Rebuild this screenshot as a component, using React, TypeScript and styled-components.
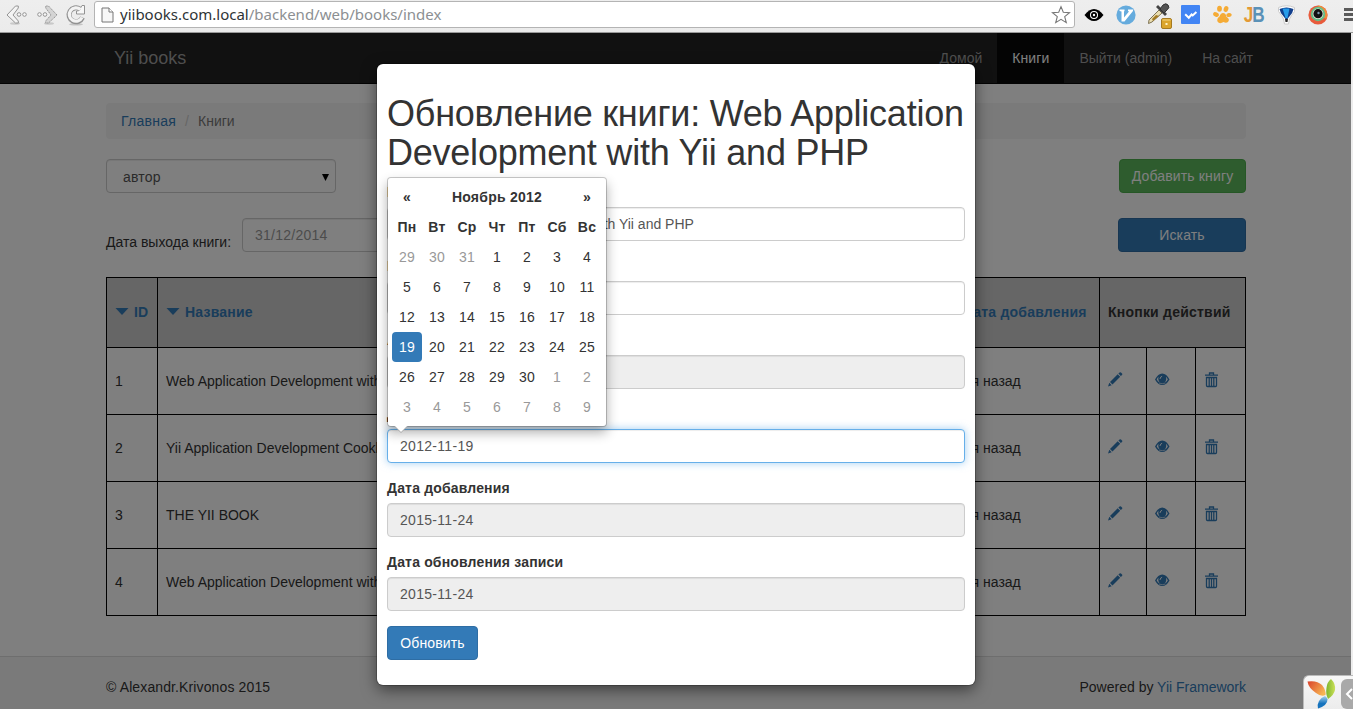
import React from "react";
import styled, { createGlobalStyle, css } from "styled-components";

const GlobalStyle = createGlobalStyle`
  *, *::before, *::after { box-sizing: border-box; }
  body {
    margin: 0;
    background: #fff;
    color: #333;
    font-family: "Liberation Sans", Arial, sans-serif;
    font-size: 14px;
    line-height: 20px;
    letter-spacing: 0;
    overflow: hidden;
  }
  input, button { font: inherit; letter-spacing: inherit; }
`;

const Window = styled.div`
  display: flex;
  flex-direction: column;
  width: 1353px;
  height: 709px;
  overflow: hidden;
  background: #ededed;
`;

/* Browser toolbar */

const Toolbar = styled.div`
  display: flex;
  flex: none;
  height: 33px;
  padding-left: 2px;
  background: linear-gradient(#eeeeee, #ebebeb);
  border-bottom: 1px solid #9a9a9a;
`;

const ToolSlot = styled.div<{ $width: number }>`
  display: flex;
  flex: none;
  align-items: center;
  justify-content: center;
  width: ${(p) => p.$width}px;
  height: 29px;
`;

const AddressBar = styled.div`
  display: flex;
  flex: none;
  align-items: center;
  width: 981px;
  height: 27px;
  margin: 1px 3px 0 4px;
  padding: 0 3px 0 6px;
  background: #fff;
  border: 1px solid #b4b4b4;
  border-radius: 3px;
`;

const Url = styled.span`
  flex: 1;
  margin: -2px 0 0 6px;
  color: #8c8f92;
  font: 15px/20px "Noto Sans", "Open Sans", sans-serif;
`;

const UrlHost = styled.span`
  color: #2e3436;
`;

const MenuGlyph = styled.div`
  display: flex;
  flex: none;
  flex-direction: column;
  gap: 2px;
  width: 19px;
  height: 29px;
  padding: 8px 0 0 10px;
`;

const MenuBar = styled.span`
  height: 3px;
  background: #5a5a5a;
`;

/* Page under the dialog */

const Viewport = styled.main`
  position: relative;
  display: flex;
  flex-direction: column;
  width: 1351px;
  height: 676px;
  background: #fff;
`;

const Navbar = styled.nav`
  display: flex;
  flex: none;
  justify-content: space-between;
  height: 51px;
  padding: 0 83px 0 114px;
  background: #222;
  border-bottom: 1px solid #080808;
`;

const Brand = styled.span`
  color: #9d9d9d;
  font-size: 18px;
  line-height: 50px;
`;

const NavList = styled.div`
  display: flex;
`;

const NavLink = styled.a<{ $active?: boolean }>`
  padding: 0 15px;
  line-height: 51px;
  letter-spacing: ${(p) => (p.$active ? "0.1px" : "0")};
  color: ${(p) => (p.$active ? "#fff" : "#9d9d9d")};
  background: ${(p) => (p.$active ? "#080808" : "transparent")};
`;

const Container = styled.div`
  display: flex;
  flex-direction: column;
  width: 1140px;
  margin: 19px 0 0 106px;
`;

const Breadcrumb = styled.div`
  display: flex;
  height: 36px;
  padding: 8px 15px;
  margin-bottom: 20px;
  background: #f5f5f5;
  border-radius: 4px;
  color: #777;
`;

const Divider = styled.span`
  width: 22px;
  text-align: center;
  color: #ccc;
`;

const Link = styled.a<{ $wide?: boolean }>`
  letter-spacing: ${(p) => (p.$wide ? "0.25px" : "0")};
  color: #337ab7;
`;

const FilterRow = styled.div`
  display: flex;
  height: 34px;
  margin-bottom: 25px;
`;

const control = css`
  height: 34px;
  padding: 6px 12px;
  color: #555;
  background: #fff;
  border: 1px solid #ccc;
  border-radius: 4px;
  box-shadow: inset 0 1px 1px rgba(0, 0, 0, 0.075);
`;

const Select = styled.div`
  ${control}
  display: flex;
  justify-content: space-between;
  align-items: center;
  width: 230px;
  padding: 8px 6px 6px 16px;
  letter-spacing: 0.2px;
`;

const FilterLabel = styled.label`
  width: 136px;
  padding-top: 14px;
  white-space: nowrap;
`;

const FilterInput = styled.input`
  ${control}
  width: 230px;
  letter-spacing: 0.25px;
  &::placeholder { color: #999; opacity: 1; }
`;

const Button = styled.button<{ $tone: "success" | "primary"; $width: number; $push?: boolean }>`
  width: ${(p) => p.$width}px;
  height: 34px;
  margin-left: ${(p) => (p.$push ? "auto" : "0")};
  padding: 0;
  color: #fff;
  letter-spacing: 0.15px;
  white-space: nowrap;
  border-radius: 4px;
  border: 1px solid ${(p) => (p.$tone === "success" ? "#4cae4c" : "#2e6da4")};
  background: ${(p) => (p.$tone === "success" ? "#5cb85c" : "#337ab7")};
`;

const Table = styled.table`
  width: 1140px;
  table-layout: fixed;
  border-collapse: collapse;
`;

const Th = styled.th`
  height: 70px;
  padding: 0 8px 2px;
  text-align: left;
  letter-spacing: 0.22px;
  white-space: nowrap;
  background: #ccc;
  border: 1px solid #000;
`;

const Td = styled.td`
  height: 67px;
  padding: 0 8px;
  white-space: nowrap;
  border: 1px solid #000;
`;

const SortLink = styled.a`
  display: flex;
  align-items: center;
  gap: 5px;
  color: #337ab7;
`;

const IconLink = styled.a`
  display: block;
  height: 18px;
  color: #337ab7;
`;

const Footer = styled.footer`
  display: flex;
  justify-content: space-between;
  height: 53px;
  margin-top: auto;
  padding: 20px 105px 0 106px;
  background: #f5f5f5;
  border-top: 1px solid #ddd;
`;

const Copyright = styled.span`
  letter-spacing: 0.12px;
`;

const Backdrop = styled.div`
  position: absolute;
  inset: 0;
  background: rgba(0, 0, 0, 0.5);
`;

/* Dialog */

const Dialog = styled.section`
  position: absolute;
  top: 31px;
  left: 377px;
  width: 598px;
  height: 621px;
  padding: 10px;
  background: #fff;
  border-radius: 6px;
  box-shadow: 0 5px 15px rgba(0, 0, 0, 0.5), 0 0 0 1px rgba(0, 0, 0, 0.2);
`;

const Title = styled.h1`
  margin: 20px 0 10px;
  font-size: 36px;
  font-weight: 400;
  line-height: 39px;
  letter-spacing: -0.23px;
  white-space: nowrap;
`;

const Field = styled.div`
  display: flex;
  flex-direction: column;
  margin-bottom: 15px;
`;

const Label = styled.label`
  height: 20px;
  margin-bottom: 5px;
  font-weight: 700;
  letter-spacing: 0.17px;
`;

const TextInput = styled.input<{ $active?: boolean; $numeric?: boolean }>`
  ${control}
  width: 100%;
  outline: none;
  letter-spacing: ${(p) => (p.$numeric ? "0.3px" : "0")};
  &[readonly] { background: #eee; }
  ${(p) =>
    p.$active &&
    css`
      border-color: #66afe9;
      box-shadow: inset 0 1px 1px rgba(0, 0, 0, 0.075), 0 0 8px rgba(102, 175, 233, 0.6);
    `}
`;

const Picker = styled.div`
  position: absolute;
  top: 113px;
  left: 10px;
  width: 220px;
  height: 250px;
  padding: 4px;
  letter-spacing: 0.25px;
  background: #fff;
  background-clip: padding-box;
  border: 1px solid rgba(0, 0, 0, 0.2);
  border-radius: 4px;
  box-shadow: 0 6px 12px rgba(0, 0, 0, 0.3);
  &::before, &::after {
    content: "";
    position: absolute;
    border: solid transparent;
    border-bottom-width: 0;
  }
  &::before {
    left: 6px;
    bottom: -7px;
    border-width: 7px 7px 0;
    border-top-color: #aaa;
  }
  &::after {
    left: 7px;
    bottom: -6px;
    border-width: 6px 6px 0;
    border-top-color: #fff;
  }
`;

const Grid = styled.div`
  display: grid;
  grid-template-columns: repeat(7, 30px);
  grid-auto-rows: 30px;
`;

const Cell = styled.span<{ $head?: boolean; $muted?: boolean; $selected?: boolean; $span?: number }>`
  grid-column: span ${(p) => p.$span || 1};
  line-height: 30px;
  text-align: center;
  border-radius: 4px;
  font-weight: ${(p) => (p.$head ? 700 : 400)};
  color: ${(p) => (p.$selected ? "#fff" : p.$muted ? "#999" : "#333")};
  background: ${(p) => (p.$selected ? "#337ab7" : "transparent")};
`;

const DebugPanel = styled.div`
  position: absolute;
  right: -2px;
  bottom: 0;
  display: flex;
  justify-content: space-between;
  width: 50px;
  height: 34px;
  padding: 3px 0 0 3px;
  background: linear-gradient(#f7f7f7, #ececec);
  border: 1px solid #bbb;
  border-width: 1px 0 0 1px;
  border-radius: 6px 0 0 0;
`;

const DebugToggle = styled.div`
  display: flex;
  align-items: center;
  justify-content: flex-end;
  width: 12px;
  height: 30px;
  background: #a9a9a9;
  border-radius: 6px 0 0 6px;
`;

/* Icons */

const Arrow = ({ flip }: { flip?: boolean }) => (
  <svg width="22" height="22" viewBox="0 0 22 22" transform={flip ? "scale(-1 1)" : undefined}>
    <ellipse cx="9" cy="19.500" rx="5" ry="1.200" fill="#c9c9c9" />
    <path d="M1 11 9.500 2h2.800v2L7 11l5.300 6v2H9.500Z" fill={flip ? "#d4d4d4" : "#f4f4f4"} stroke="#949494" strokeDasharray={flip ? "1.500 .7" : undefined} />
    <circle cx="13" cy="10.500" r="1.800" fill="#f8f8f8" stroke="#949494" />
    <circle cx="18.500" cy="10.500" r="1.800" fill="#f8f8f8" stroke="#949494" />
  </svg>
);

const Reload = () => (
  <svg width="22" height="22" viewBox="0 0 22 22">
    <ellipse cx="11" cy="20.300" rx="7" ry="1.300" fill="#c4c4c4" />
    <path d="M17.500 13.500A7 7 0 1 1 15 5" fill="none" stroke="#929292" strokeWidth="5" />
    <path d="M19.500 1.500v8.500H11.500V7l3-.5L15.500 4 17 1.500Z" fill="#f7f7f7" stroke="#929292" />
    <path d="M17 13.500A6.700 6.700 0 1 1 15.500 5.500" fill="none" stroke="#f3f3f3" strokeWidth="3.200" />
  </svg>
);

const PageIcon = () => (
  <svg width="13" height="16" viewBox="0 0 13 16">
    <path d="M1 1h7l4 4v10H1Z" fill="#f7f7f7" stroke="#777" />
    <path d="M8 1v4h4" fill="#fff" stroke="#777" />
  </svg>
);

const Star = () => (
  <svg width="20" height="20" viewBox="0 0 20 20">
    <path d="m10 1.600 2.300 5.700 6.200.4-4.800 3.900 1.600 6L10 14.300l-5.300 3.300 1.600-6-4.800-3.900 6.200-.4Z" fill="#fff" stroke="#777" strokeWidth="1.100" />
  </svg>
);

const BlackEye = () => (
  <svg width="20" height="14" viewBox="0 0 20 14">
    <path d="M.5 7Q5 1 10 1t9.500 6Q15 13 10 13T.5 7Z" fill="#000" />
    <circle cx="10" cy="7" r="4" fill="#fff" />
    <circle cx="10" cy="7" r="3" fill="#000" />
    <circle cx="10" cy="7" r="1.200" fill="#fff" />
  </svg>
);

const Vimium = () => (
  <svg width="20" height="20" viewBox="0 0 20 20">
    <circle cx="10" cy="10" r="9.600" fill="#65abdd" />
    <path d="M3.500 4.500h5V6L8 6.500v6L13 6.500 12 6V4.500h5V6L8.500 16.500H5.500v-10l-2-.5Z" fill="#fff" />
  </svg>
);

const Eyedropper = () => (
  <svg width="28" height="28" viewBox="0 0 28 28">
    <path d="M5 19 15 9l3 3L8 21l-3.500 1.500Z" fill="#e9ddb0" stroke="#7d7253" />
    <path d="m8 18 4-4 3 1-6 5Z" fill="#a47b22" />
    <path d="m12 6 2-2 9 9-2 2Z" fill="#444" />
    <path d="m16 8 3-4q3-2.500 5 0t-.5 4.500L20 12Z" fill="#555" stroke="#333" />
    <rect x="17.500" y="17.500" width="10" height="10" rx="1.500" fill="#dba52c" stroke="#a57a21" />
    <path d="M18.500 19h8" stroke="#f3d582" />
    <rect x="21.500" y="22" width="2" height="2" fill="#fff3c5" />
  </svg>
);

const TaskIcon = () => (
  <svg width="19" height="19" viewBox="0 0 19 19">
    <rect width="19" height="19" rx="1" fill="#4285f4" />
    <path d="m4.200 9.200 3.600 3.500 2.800-3.200 1.100 1L15.400 7" fill="none" stroke="#fff" strokeWidth="2" />
  </svg>
);

const Paw = () => (
  <svg width="19" height="19" viewBox="0 0 19 19" fill="#f5ab35">
    <ellipse cx="6.500" cy="3.700" rx="2.400" ry="3" />
    <ellipse cx="13" cy="4" rx="2.300" ry="3" transform="rotate(20 13 4)" />
    <ellipse cx="3" cy="9.500" rx="3" ry="2.100" transform="rotate(25 3 9.500)" />
    <ellipse cx="16" cy="10" rx="2.700" ry="2" transform="rotate(-10 16 10)" />
    <path d="M10 8q3 0 3.200 3.500Q17.500 14 15 17q-2 1.500-4.500 0-4 2.500-6-.5Q3.500 13 6.500 11.500 7.500 8 10 8Z" />
  </svg>
);

const JbMark = styled.span`
  display: flex;
  font-size: 22px;
  font-weight: 700;
  line-height: 20px;
  letter-spacing: -1.5px;
  color: #e39a35;
  transform: scaleX(0.78);
`;

const JbSecond = styled.span`
  color: #5a91b7;
`;

const Funnel = () => (
  <svg width="19" height="20" viewBox="0 0 19 20">
    <path d="M1.500 2.500Q9.500-1 17.500 2.500q1.500 4-3 8L12.500 14l-1 5h-4l-1-5-2-3.500Q0 6 1.500 2.500Z" fill="#fff" stroke="#ccc" />
    <path d="M2.500 4q7-3 14 0-.5 4-4.500 8L10.500 14h-2L7 12Q3 8 2.500 4Z" fill="#123f8c" />
    <path d="M5.500 3.500h7L10.500 13h-2Z" fill="#279cea" />
    <path d="M8 14h3l-.5 3h-2Z" fill="#222" />
  </svg>
);

const ColorEye = () => (
  <svg width="20" height="20" viewBox="0 0 20 20">
    <circle cx="10" cy="10" r="9.600" fill="#e85b3c" />
    <path d="M10 .4A9.600 9.600 0 0 1 18.500 14L14 12Z" fill="#f08a3b" />
    <circle cx="10" cy="9" r="7.200" fill="#65bf89" />
    <circle cx="10" cy="8.700" r="5.300" fill="#efe9da" />
    <circle cx="10" cy="8.700" r="4.600" fill="#111" />
    <circle cx="10.500" cy="8" r="1.200" fill="#7b9ab0" />
  </svg>
);

const Caret = () => (
  <svg width="7" height="7" viewBox="0 0 7 7">
    <path d="M0 0h7L3.500 7Z" fill="#000" />
  </svg>
);

const SortArrow = () => (
  <svg width="14" height="10" viewBox="0 0 14 10">
    <path d="M.5 1h13L7 8Z" fill="currentColor" />
  </svg>
);

const Pencil = () => (
  <svg width="15" height="15" viewBox="0 0 15 15" fill="currentColor">
    <path d="M0 14.500 1.300 10.800 3.700 13.200ZM2 10 9.700 2.300l2.500 2.500L4.500 12.500ZM10.400 1.600 11.600.5q.7-.6 1.400 0l1 1q.7.700 0 1.400l-1.200 1.200Z" />
  </svg>
);

const Eye = () => (
  <svg width="15" height="15" viewBox="0 0 15 15">
    <path d="M0 7.500Q3 1.500 7.250 1.500T14.500 7.500Q11.500 13 7.250 13T0 7.500Z" fill="currentColor" />
    <path d="M1.700 7.500Q2.300 5.700 3.500 4.800 2.600 8.500 5 10.600 2.900 9.900 1.700 7.500ZM12.800 7.500Q12.200 5.700 11 4.800 11.900 8.500 9.500 10.600 11.600 9.900 12.800 7.500Z" fill="#fff" />
    <path d="M5 6.900Q5.200 4.800 7.100 4.300" fill="none" stroke="#fff" />
    <path d="M4 11.100Q7.250 12.200 10.500 11.100" fill="none" stroke="#fff" strokeWidth=".6" />
  </svg>
);

const Trash = () => (
  <svg width="15" height="16" viewBox="-1 0 15 16" fill="none" stroke="currentColor">
    <path d="M0 3.200h13M4.500 3V1h4v2" strokeWidth="1.300" />
    <path d="M1.500 5.500h10v8q0 1-1 1h-8q-1 0-1-1ZM4.200 6v8M6.500 6v8M8.800 6v8" strokeWidth="1.300" />
  </svg>
);

const YiiLogo = () => (
  <svg width="30" height="30" viewBox="0 0 30 30">
    <defs>
      <linearGradient id="orange" x1="0" x2="1" y1="0" y2=".6">
        <stop stopColor="#d9412b" />
        <stop offset="1" stopColor="#f7b452" />
      </linearGradient>
      <linearGradient id="green" x1="0" x2="1">
        <stop stopColor="#7cb52c" />
        <stop offset="1" stopColor="#cce05a" />
      </linearGradient>
      <linearGradient id="blue" x2="0" y2="1">
        <stop stopColor="#a5d3ee" />
        <stop offset=".6" stopColor="#1673bd" />
      </linearGradient>
    </defs>
    <path d="M.5 2.500Q10 1 15 6q4 5 3.500 10Q14 18 9 14 1.500 9 .5 2.500Z" fill="url(#orange)" />
    <path d="M24 0q5 5 4 11-1 5-7 9-2.500-5-1.500-11Q20 3 24 0Z" fill="url(#green)" />
    <path d="M18 17q2 1 2.500 3.500 0 6-9.500 9-1-4 1-7.500T18 17Z" fill="url(#blue)" />
  </svg>
);

const Chevron = () => (
  <svg width="8" height="12" viewBox="0 0 8 12">
    <path d="M7 1 2 6l5 5" fill="none" stroke="#fff" strokeWidth="2" />
  </svg>
);

/* Data */

const books = [
  "Web Application Development with Yii and PHP",
  "Yii Application Development Cookbook",
  "THE YII BOOK",
  "Web Application Development with Yii 2 and PHP",
];

const weekdays = ["Пн", "Вт", "Ср", "Чт", "Пт", "Сб", "Вс"];

const days = Array.from({ length: 42 }, (_, i) => {
  if (i < 3) return { day: 29 + i, muted: true };
  if (i < 33) return { day: i - 2, muted: false };
  return { day: i - 32, muted: true };
});

const extensions = [BlackEye, Vimium, Eyedropper, TaskIcon, Paw, null, Funnel, ColorEye];

export default function App() {
  return (
    <Window>
      <GlobalStyle />
      <Toolbar>
        <ToolSlot $width={30}><Arrow /></ToolSlot>
        <ToolSlot $width={29}><Arrow flip /></ToolSlot>
        <ToolSlot $width={29}><Reload /></ToolSlot>
        <AddressBar>
          <PageIcon />
          <Url><UrlHost>yiibooks.com.local</UrlHost>/backend/web/books/index</Url>
          <Star />
        </AddressBar>
        {extensions.map((Icon, i) => (
          <ToolSlot key={i} $width={32}>
            {Icon ? <Icon /> : <JbMark>J<JbSecond>B</JbSecond></JbMark>}
          </ToolSlot>
        ))}
        <MenuGlyph><MenuBar /><MenuBar /><MenuBar /></MenuGlyph>
      </Toolbar>

      <Viewport>
        <Navbar>
          <Brand>Yii books</Brand>
          <NavList>
            <NavLink>Домой</NavLink>
            <NavLink $active>Книги</NavLink>
            <NavLink>Выйти (admin)</NavLink>
            <NavLink>На сайт</NavLink>
          </NavList>
        </Navbar>

        <Container>
          <Breadcrumb>
            <Link $wide>Главная</Link><Divider>/</Divider>Книги
          </Breadcrumb>
          <FilterRow>
            <Select>автор<Caret /></Select>
            <Button $tone="success" $width={127} $push>Добавить книгу</Button>
          </FilterRow>
          <FilterRow>
            <FilterLabel>Дата выхода книги:</FilterLabel>
            <FilterInput placeholder="31/12/2014" />
            <Button $tone="primary" $width={128} $push>Искать</Button>
          </FilterRow>
          <Table>
            <colgroup>
              <col style={{ width: 51 }} />
              <col style={{ width: 778 }} />
              <col style={{ width: 164 }} />
              <col style={{ width: 47 }} />
              <col style={{ width: 49 }} />
              <col style={{ width: 50 }} />
            </colgroup>
            <thead>
              <tr>
                <Th><SortLink><SortArrow />ID</SortLink></Th>
                <Th><SortLink><SortArrow />Название</SortLink></Th>
                <Th><SortLink><SortArrow />Дата добавления</SortLink></Th>
                <Th colSpan={3}>Кнопки действий</Th>
              </tr>
            </thead>
            <tbody>
              {books.map((title, i) => (
                <tr key={title}>
                  <Td>{i + 1}</Td>
                  <Td>{title}</Td>
                  <Td>4 дня назад</Td>
                  <Td><IconLink><Pencil /></IconLink></Td>
                  <Td><IconLink><Eye /></IconLink></Td>
                  <Td><IconLink><Trash /></IconLink></Td>
                </tr>
              ))}
            </tbody>
          </Table>
        </Container>

        <Footer>
          <Copyright>© Alexandr.Krivonos 2015</Copyright>
          <span>Powered by <Link>Yii Framework</Link></span>
        </Footer>

        <Backdrop />

        <Dialog>
          <Title>Обновление книги: Web Application<br />Development with Yii and PHP</Title>
          <Field>
            <Label>Название</Label>
            <TextInput defaultValue="Web Application Development with Yii and PHP" />
          </Field>
          <Field>
            <Label>Превью</Label>
            <TextInput />
          </Field>
          <Field>
            <Label>Автор</Label>
            <TextInput readOnly />
          </Field>
          <Field>
            <Label>Дата выхода книги</Label>
            <TextInput $active $numeric defaultValue="2012-11-19" />
          </Field>
          <Field>
            <Label>Дата добавления</Label>
            <TextInput readOnly $numeric value="2015-11-24" />
          </Field>
          <Field>
            <Label>Дата обновления записи</Label>
            <TextInput readOnly $numeric value="2015-11-24" />
          </Field>
          <Button $tone="primary" $width={91}>Обновить</Button>

          <Picker>
            <Grid>
              <Cell $head>«</Cell>
              <Cell $head $span={5}>Ноябрь 2012</Cell>
              <Cell $head>»</Cell>
              {weekdays.map((name) => <Cell key={name} $head>{name}</Cell>)}
              {days.map(({ day, muted }, i) => (
                <Cell key={i} $muted={muted} $selected={!muted && day === 19}>{day}</Cell>
              ))}
            </Grid>
          </Picker>
        </Dialog>

        <DebugPanel>
          <YiiLogo />
          <DebugToggle><Chevron /></DebugToggle>
        </DebugPanel>
      </Viewport>
    </Window>
  );
}
